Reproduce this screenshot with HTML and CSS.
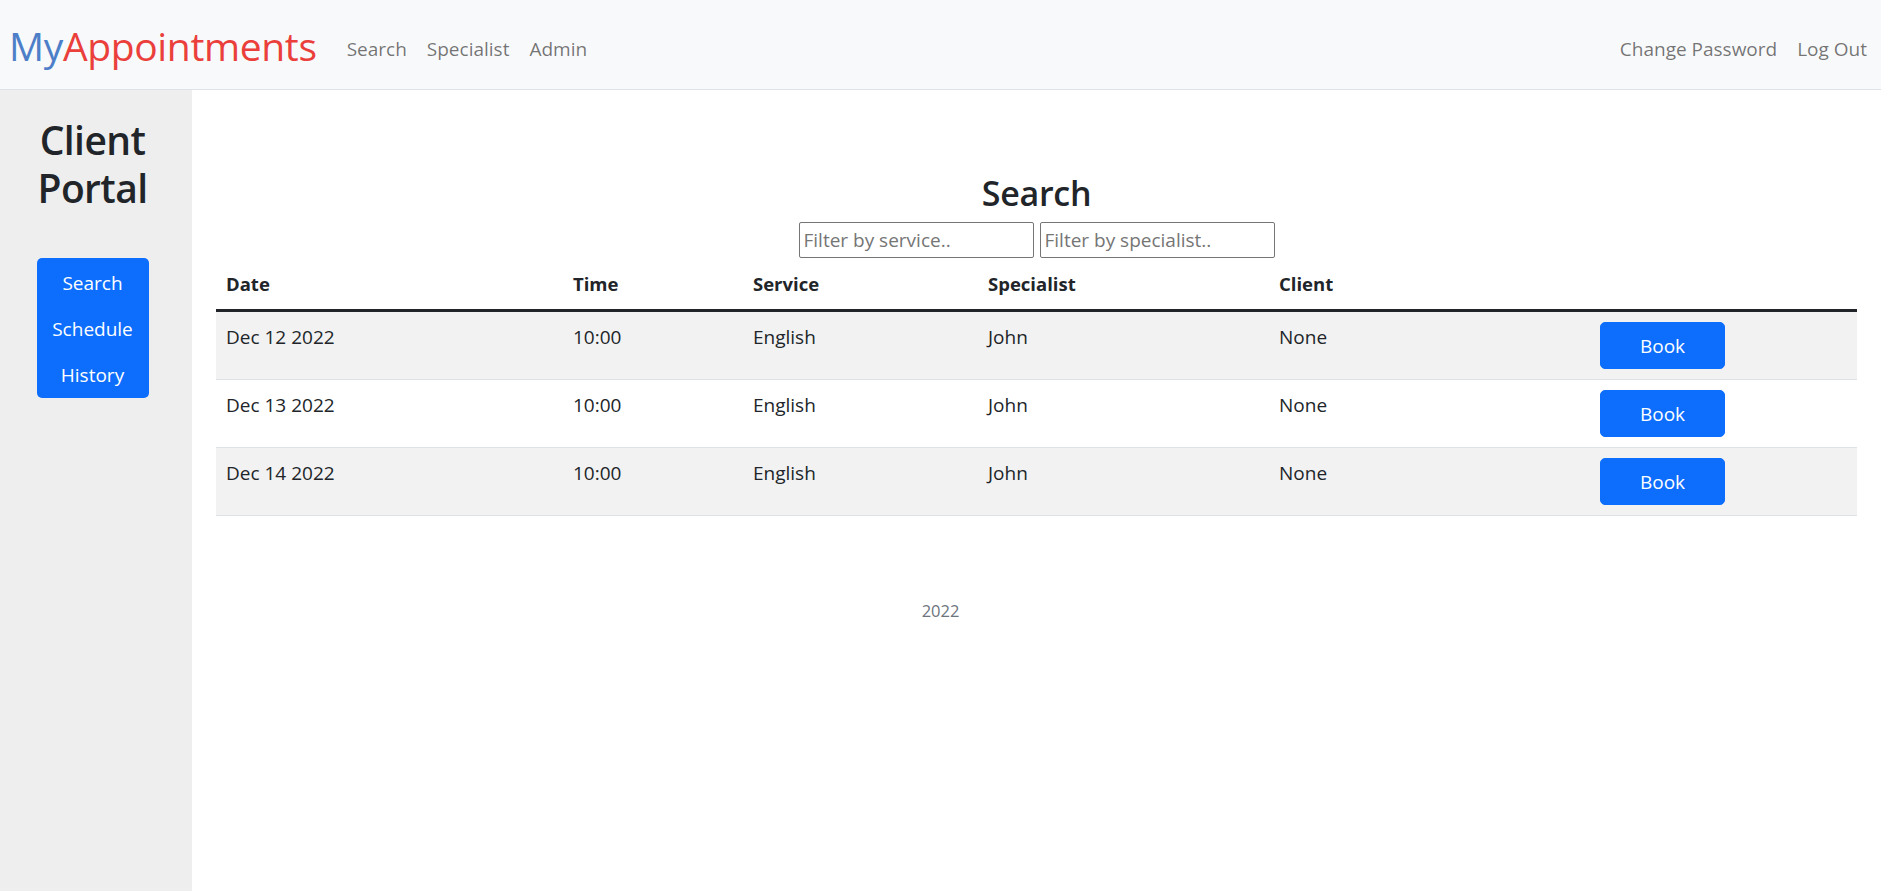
FILE: index.html
```html
<!DOCTYPE html>
<html lang="en">
<head>
<meta charset="utf-8">
<title>MyAppointments - Search</title>
<link rel="stylesheet" href="styles.css">
</head>
<body>
<header class="navbar">
  <a class="brand" href="#"><span class="brand-my">My</span><span class="brand-app">Appointments</span></a>
  <nav class="nav">
    <a class="nav-link" href="#">Search</a>
    <a class="nav-link" href="#">Specialist</a>
    <a class="nav-link" href="#">Admin</a>
  </nav>
  <nav class="nav nav-right">
    <a class="nav-link" href="#">Change Password</a>
    <a class="nav-link" href="#">Log Out</a>
  </nav>
</header>
<div class="layout">
  <aside class="sidebar">
    <h2 class="side-title">Client Portal</h2>
    <div class="side-menu">
      <a href="#">Search</a>
      <a href="#">Schedule</a>
      <a href="#">History</a>
    </div>
  </aside>
  <main class="main">
    <h3 class="page-title">Search</h3>
    <div class="filters">
      <input class="filter" type="text" placeholder="Filter by service..">
      <input class="filter" type="text" placeholder="Filter by specialist..">
    </div>
    <table class="table">
      <colgroup>
        <col class="c-date"><col class="c-time"><col class="c-service"><col class="c-spec"><col class="c-client"><col class="c-act">
      </colgroup>
      <thead>
        <tr><th>Date</th><th>Time</th><th>Service</th><th>Specialist</th><th>Client</th><th></th></tr>
      </thead>
      <tbody>
        <tr><td>Dec 12 2022</td><td>10:00</td><td>English</td><td>John</td><td>None</td><td class="act"><button class="btn">Book</button></td></tr>
        <tr><td>Dec 13 2022</td><td>10:00</td><td>English</td><td>John</td><td>None</td><td class="act"><button class="btn">Book</button></td></tr>
        <tr><td>Dec 14 2022</td><td>10:00</td><td>English</td><td>John</td><td>None</td><td class="act"><button class="btn">Book</button></td></tr>
      </tbody>
    </table>
    <footer class="footer">2022</footer>
  </main>
</div>
</body>
</html>
```
FILE: styles.css
```css
* { box-sizing: border-box; }
html, body { margin: 0; padding: 0; }
body {
  font-family: "Open Sans", "Noto Sans", sans-serif;
  font-size: 20px;
  line-height: 1.5;
  color: #212529;
  background: #fff;
}
a { text-decoration: none; }

.navbar {
  display: flex;
  align-items: center;
  height: 90px;
  padding: 3px 4px 0 9px;
  background: #f8f9fa;
  border-bottom: 1px solid #dee2e6;
}
.brand {
  font-size: 39px;
  line-height: 1.5;
  margin-right: 20px;
  letter-spacing: -0.35px;
}
.brand-my { color: #4d7fc9; }
.brand-app { color: #ea3f3a; }
.nav { display: flex; padding-top: 6px; }
.nav-right { margin-left: auto; }
.nav-link {
  padding: 10px;
  line-height: 30px;
  color: rgba(0, 0, 0, 0.55);
  font-size: 19px;
}

.layout {
  display: flex;
  min-height: calc(100vh - 90px);
}
.sidebar {
  width: 192px;
  flex: 0 0 192px;
  background: #eeeeee;
  padding: 26px 7px 0 0;
  text-align: center;
}
.side-title {
  margin: 0 0 46px;
  font-size: 39px;
  line-height: 48px;
  font-weight: 600;
  letter-spacing: -0.6px;
}
.side-menu {
  width: 112px;
  margin: 0 auto;
  padding-top: 2px;
  background: #0d6efd;
  border-radius: 5px;
  display: flex;
  flex-direction: column;
}
.side-menu a {
  display: block;
  padding: 8px 0;
  line-height: 30px;
  color: #fff;
  font-size: 19px;
}

.main {
  flex: 1;
  padding: 82px 24px 0;
}
.page-title {
  margin: 0 0 8px;
  text-align: center;
  font-size: 34px;
  line-height: 42px;
  font-weight: 600;
  letter-spacing: -0.3px;
}
.filters {
  display: flex;
  justify-content: center;
  gap: 6px;
  margin-bottom: 1px;
}
.filter {
  width: 235px;
  height: 36px;
  padding: 1px 4px;
  border: 1px solid #767676;
  border-radius: 2px;
  font-family: inherit;
  font-size: 19px;
  color: #212529;
  background: #fff;
}
.filter::placeholder { color: #757575; }

.table {
  width: 100%;
  border-collapse: collapse;
  table-layout: fixed;
}
.c-date { width: 347px; }
.c-time { width: 180px; }
.c-service { width: 235px; }
.c-spec { width: 291px; }
.c-client { width: 321px; }
.c-act { width: 267px; }
.table th {
  padding: 10px;
  text-align: left;
  font-weight: 700;
  font-size: 18.5px;
  line-height: 30px;
  border-bottom: 3px solid #212529;
  vertical-align: bottom;
}
.table td {
  padding: 10px;
  font-size: 19px;
  line-height: 30px;
  vertical-align: top;
  border-bottom: 1px solid #dee2e6;
}
.table tbody tr:nth-child(odd) td { background: #f2f2f2; }
.btn {
  display: block;
  width: 125px;
  height: 47px;
  padding: 0;
  border: 1px solid #0d6efd;
  border-radius: 5px;
  background: #0d6efd;
  color: #fff;
  font-family: inherit;
  font-size: 19px;
  line-height: 30px;
}

.footer {
  padding: 83px 192px 0 0;
  text-align: center;
  font-size: 16.5px;
  color: #6c757d;
}
```
